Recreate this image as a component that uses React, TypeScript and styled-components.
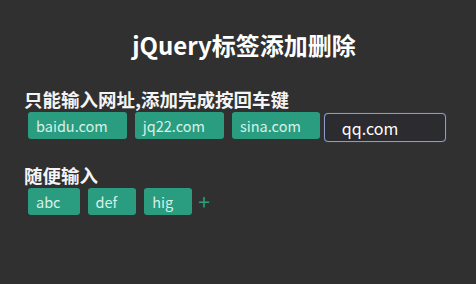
import React, { useState } from "react";
import styled, { createGlobalStyle } from "styled-components";

const Global = createGlobalStyle`
  html, body {
    margin: 0;
    padding: 0;
    background: #303030;
  }
  body {
    font-family: "Noto Sans CJK SC", "Noto Sans", sans-serif;
    color: #ffffff;
  }
`;

const Page = styled.div`
  width: 476px;
  height: 284px;
  box-sizing: border-box;
  padding: 27px 24px 0 24px;
  background: #303030;
  overflow: hidden;
`;

const Title = styled.h1`
  margin: 0 0 0 12px;
  font-size: 24px;
  line-height: 36px;
  font-weight: 700;
  text-align: center;
  color: #ffffff;
`;

const Section = styled.section<{ $top: number }>`
  margin-top: ${(p) => p.$top}px;
`;

const Label = styled.div`
  font-size: 18.5px;
  line-height: 22px;
  font-weight: 700;
  color: #f4f4f4;
`;

const TagRow = styled.div`
  display: flex;
  align-items: flex-start;
  gap: 8px;
  padding-left: 4px;
  margin-top: 1px;
`;

const Tag = styled.span`
  display: inline-flex;
  align-items: center;
  height: 27px;
  margin-top: 1px;
  padding: 0 19px 0 8px;
  border-radius: 3px;
  background: #2a9d80;
  color: #d6f1e8;
  font-size: 14.5px;
  line-height: 27px;
`;

const Input = styled.input`
  box-sizing: border-box;
  width: 122px;
  height: 29px;
  margin-left: -4px;
  margin-top: 2px;
  padding: 0 0 0 17px;
  border: 1.5px solid #8d9bcb;
  border-radius: 4px;
  background: #2c2b2f;
  color: #ffffff;
  font-family: "Noto Sans CJK SC", "Noto Sans", sans-serif;
  font-size: 16px;
  outline: none;
  box-shadow: 0 0 1px rgba(141, 155, 203, 0.6);
`;

const Plus = styled.span`
  color: #2a9d80;
  font-size: 21px;
  line-height: 27px;
  font-weight: 400;
  margin-top: 1px;
  margin-left: -2px;
`;

export default function App() {
  const [value, setValue] = useState("qq.com");
  return (
    <Page>
      <Global />
      <Title>jQuery标签添加删除</Title>
      <Section $top={25}>
        <Label>只能输入网址,添加完成按回车键</Label>
        <TagRow>
          <Tag>baidu.com</Tag>
          <Tag>jq22.com</Tag>
          <Tag>sina.com</Tag>
          <Input value={value} onChange={(e) => setValue(e.target.value)} />
        </TagRow>
      </Section>
      <Section $top={22}>
        <Label>随便输入</Label>
        <TagRow>
          <Tag>abc</Tag>
          <Tag>def</Tag>
          <Tag>hig</Tag>
          <Plus>+</Plus>
        </TagRow>
      </Section>
    </Page>
  );
}
